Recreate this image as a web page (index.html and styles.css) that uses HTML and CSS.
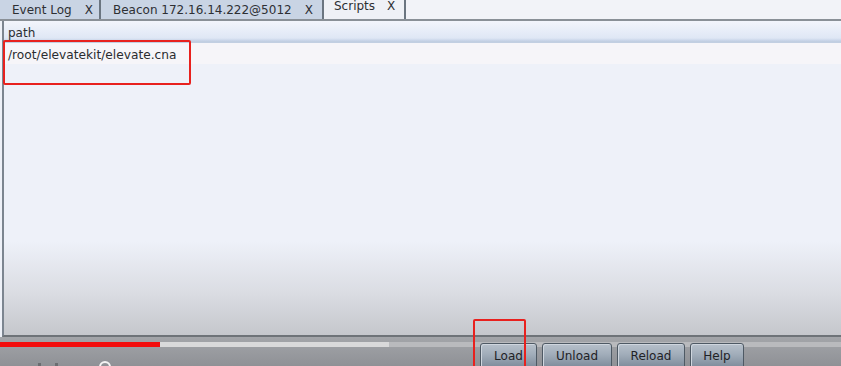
FILE: index.html
```html
<!DOCTYPE html>
<html>
<head>
<meta charset="utf-8">
<link rel="stylesheet" href="styles.css">
</head>
<body>
<div class="app">
  <div class="tabs">
    <div class="tab tab-event"><span class="tab-label">Event Log</span><span class="tab-x">X</span></div>
    <div class="tab tab-beacon"><span class="tab-label">Beacon 172.16.14.222@5012</span><span class="tab-x">X</span></div>
    <div class="tab tab-active"><span class="tab-label">Scripts</span><span class="tab-x">X</span></div>
    <div class="tab-fill"></div>
  </div>
  <div class="panel">
    <div class="table-head">path</div>
    <div class="table-row">/root/elevatekit/elevate.cna</div>
    <div class="table-empty"></div>
  </div>
  <div class="footer">
    <div class="progress"><div class="progress-played"></div><div class="progress-loaded"></div></div>
    <div class="controls">
      <span class="ctl ctl-a"></span>
      <span class="ctl ctl-b"></span>
      <span class="ctl-knob"></span>
    </div>
    <div class="buttons">
      <button class="btn btn-load">Load</button>
      <button class="btn btn-unload">Unload</button>
      <button class="btn btn-reload">Reload</button>
      <button class="btn btn-help">Help</button>
    </div>
  </div>
  <div class="mark mark-row"></div>
  <div class="mark mark-load"></div>
</div>
</body>
</html>
```
FILE: styles.css
```css
* { box-sizing: border-box; }
html, body { margin: 0; padding: 0; }
body {
  width: 841px;
  height: 366px;
  overflow: hidden;
  font-family: "DejaVu Sans", "Liberation Sans", sans-serif;
  font-size: 12px;
  color: #2a2c30;
  background: #eef1f8;
}
.app {
  position: relative;
  width: 841px;
  height: 366px;
  display: flex;
  flex-direction: column;
}
.tabs {
  height: 21px;
  display: flex;
  align-items: flex-end;
  background: #f2f3f8;
  border-bottom: 2px solid #8a9097;
  flex: none;
}
.tab {
  height: 19px;
  display: flex;
  align-items: center;
  background: #c9d4e4;
  border-right: 2px solid #6b7580;
  color: #2d2f33;
  padding-top: 0;
}
.tab-event { width: 101px; padding-left: 12px; }
.tab-event .tab-x { margin-left: 13px; }
.tab-beacon { width: 223px; padding-left: 12px; }
.tab-beacon .tab-x { margin-left: 13px; }
.tab-active {
  width: 82px;
  height: 21px;
  padding-left: 10px;
  background: #eff1f6;
  align-items: flex-start;
  padding-top: 1px;
}
.tab-active .tab-x { margin-left: 12px; }
.tab-x { font-size: 12px; }
.tab-fill { flex: 1; height: 21px; }
.panel {
  flex: 1;
  display: flex;
  flex-direction: column;
  margin-left: 2px;
  border-left: 2px solid #7c8590;
  border-bottom: 2px solid #6e7378;
  background: linear-gradient(to bottom, #eef1f9 0, #eef1f9 70%, #dadce2 87%, #c5c7cc 100%);
}
.table-head {
  height: 22px;
  padding: 5px 0 0 4px;
  background: linear-gradient(to bottom, #f3f5fc 0, #dfe7f5 85%, #c4d1e6 100%);
  border-bottom: 2px solid #c2cfe2;
  color: #2a2c30;
  line-height: 14px;
}
.table-row {
  height: 21px;
  padding: 5px 0 0 4px;
  background: #f6f5f9;
  line-height: 14px;
  color: #2a2c30;
  font-size: 12.2px;
}
.table-empty { flex: 1; }
.footer {
  position: relative;
  height: 29px;
  flex: none;
  background: linear-gradient(to bottom, #a3a5a9 0, #8f9196 100%);
}
.progress {
  position: absolute;
  left: 0;
  top: 5px;
  width: 841px;
  height: 5px;
  display: flex;
  background: #b9babd;
}
.progress-played { width: 160px; background: #f30d0d; }
.progress-loaded { width: 229px; background: #d9d9da; }
.controls { position: absolute; left: 0; top: 0; width: 200px; height: 29px; }
.ctl-knob {
  position: absolute;
  left: 99px;
  top: 24px;
  width: 12px;
  height: 12px;
  border-radius: 50%;
  border: 2px solid #f4f4f4;
}
.ctl {
  position: absolute;
  top: 26px;
  width: 3px;
  height: 4px;
  background: #6b6d71;
}
.ctl-a { left: 38px; }
.ctl-b { left: 55px; }
.buttons {
  position: absolute;
  left: 480px;
  top: 6px;
  display: flex;
  gap: 5px;
}
.btn {
  height: 25px;
  padding: 0;
  font-family: "DejaVu Sans", sans-serif;
  font-size: 12px;
  color: #1f2226;
  border: 1px solid #4e5964;
  border-radius: 3px 3px 0 0;
  background: linear-gradient(to bottom, #b7c0ca 0, #a1adba 45%, #7f8c9b 100%);
  box-shadow: inset 1px 1px 0 #cfd6de;
  padding-top: 1px;
  line-height: 14px;
  vertical-align: top;
}
.btn-load { width: 57px; }
.btn-unload { width: 70px; }
.btn-reload { width: 68px; }
.btn-help { width: 54px; }
.mark {
  position: absolute;
  border: 2px solid #e8211e;
  border-radius: 2px;
  pointer-events: none;
}
.mark-row { left: 3px; top: 40px; width: 188px; height: 45px; }
.mark-load { left: 473px; top: 319px; width: 53px; height: 49px; }
```
